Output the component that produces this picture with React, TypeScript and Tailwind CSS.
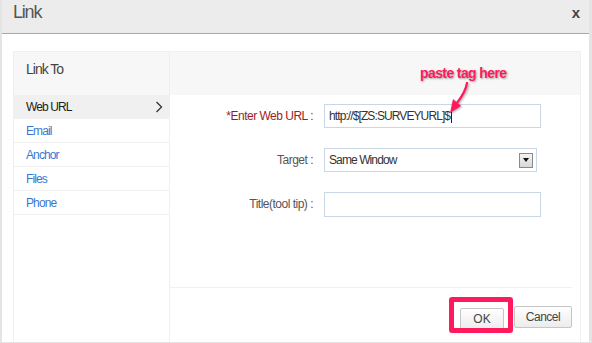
import React from "react";

const font = { fontFamily: '"Liberation Sans", Arial, sans-serif' };

function Field({ label, required, children }: { label: string; required?: boolean; children: React.ReactNode }) {
  return (
    <div className="flex items-center h-[24px]">
      <div className={`w-[145px] text-right text-[12px] tracking-[-0.5px] pr-[2px] ${required ? "text-[#a01c1c]" : "text-[#555]"}`}>
        {label} :
      </div>
      <div className="ml-[9px]">{children}</div>
    </div>
  );
}

export default function App() {
  const links = ["Email", "Anchor", "Files", "Phone"];

  return (
    <div style={font} className="w-[592px] h-[343px] bg-white border-l-2 border-r-[3px] border-b border-[#e4e4e4] flex flex-col overflow-hidden">
      {/* title bar */}
      <div className="h-[34px] shrink-0 bg-[#ececec] border-b border-[#a9a9a9] flex items-center justify-between pl-[11px] pr-[9px]">
        <span className="text-[18px] tracking-[-1.2px] text-[#555] -mt-[8px]">Link</span>
        <span className="text-[15px] font-bold text-[#444] -mt-[6px]">x</span>
      </div>

      <div className="flex-1 pt-[17px] pl-[11px] pr-[8px] flex">
        <div className="flex-1 flex border border-b-0 border-[#f0f0f0]">
          {/* left menu */}
          <div className="w-[156px] border-r border-[#efefef] flex flex-col">
            <div className="h-[43px] bg-[#f7f7f7] pt-[7px] pl-[12px] text-[14px] tracking-[-1px] text-[#444]">Link To</div>
            <div className="h-[24px] bg-[#f0f0f0] flex items-center justify-between pl-[12px] pr-[6px] text-[12px] tracking-[-0.9px] text-[#222]">
              <span>Web URL</span>
              <svg width="8" height="12" viewBox="0 0 8 12">
                <path d="M1.5 1 L6.5 6 L1.5 11" fill="none" stroke="#333" strokeWidth="1.3" />
              </svg>
            </div>
            {links.map((l) => (
              <div key={l} className="h-[24px] border-b border-[#f0f0f0] flex items-center pl-[12px] text-[12px] tracking-[-0.9px] text-[#3a78d0]">
                {l}
              </div>
            ))}
          </div>

          {/* right form */}
          <div className="flex-1 flex flex-col">
            <div className="h-[43px] bg-[#f7f7f7]" />
            <div className="relative h-[193px] border-b border-[#f0f0f0] mr-[8px] pt-[9px] flex flex-col gap-[20px]">
              <Field label="*Enter Web URL" required>
                <div className="w-[217px] h-[24px] border border-[#c9d6e6] flex items-center pl-[4px] text-[12px] tracking-[-0.9px] text-[#333]">
                  http://$[ZS:SURVEYURL]$<span className="inline-block w-px h-[14px] bg-[#222] ml-[1px]" />
                </div>
              </Field>
              <Field label="Target">
                <div className="w-[213px] h-[24px] border border-[#c9d6e6] flex items-center justify-between pl-[4px] pr-[3px] text-[12px] tracking-[-0.9px] text-[#333]">
                  <span>Same Window</span>
                  <div className="w-[14px] h-[15px] border border-[#8a8a8a] bg-gradient-to-b from-[#f4f4f4] to-[#d8d8d8] flex items-center justify-center">
                    <svg width="6" height="4" viewBox="0 0 6 4"><path d="M0 0 H6 L3 4 Z" fill="#111" /></svg>
                  </div>
                </div>
              </Field>
              <Field label="Title(tool tip)">
                <div className="w-[217px] h-[25px] border border-[#c9d6e6]" />
              </Field>

              {/* annotation */}
              <div className="absolute left-[250px] top-[-32px] text-[14px] font-bold tracking-[-0.6px] text-[#ff1a5e] [text-shadow:1px_1px_2px_rgba(0,0,0,0.35)] whitespace-nowrap">
                paste tag here
              </div>
              <svg className="absolute left-[276px] top-[-13px]" width="30" height="36" viewBox="0 0 30 36" style={{ filter: "drop-shadow(1px 1px 1px rgba(0,0,0,0.35))" }}>
                <path d="M21 1 C20 8 17 13 11 21" fill="none" stroke="#ff1a5e" strokeWidth="2.2" strokeLinecap="round" />
                <path d="M4 31 L7 17 L15 24 Z" fill="#ff1a5e" />
              </svg>
            </div>

            <div className="flex justify-end gap-[10px] pt-[18px] pr-[8px]">
              <div className="relative">
                <button className="w-[44px] h-[22px] border border-[#c6c6c6] rounded-[2px] bg-gradient-to-b from-white to-[#ececec] text-[12px] text-[#444]">
                  OK
                </button>
                <div className="absolute -left-[11px] -top-[9px] w-[64px] h-[36px] border-[5px] border-[#ff1a5e] rounded-[3px]" />
              </div>
              <button className="w-[58px] h-[22px] border border-[#c6c6c6] rounded-[2px] bg-gradient-to-b from-white to-[#ececec] text-[12px] tracking-[-0.5px] text-[#444]">
                Cancel
              </button>
            </div>
          </div>
        </div>
      </div>
    </div>
  );
}
